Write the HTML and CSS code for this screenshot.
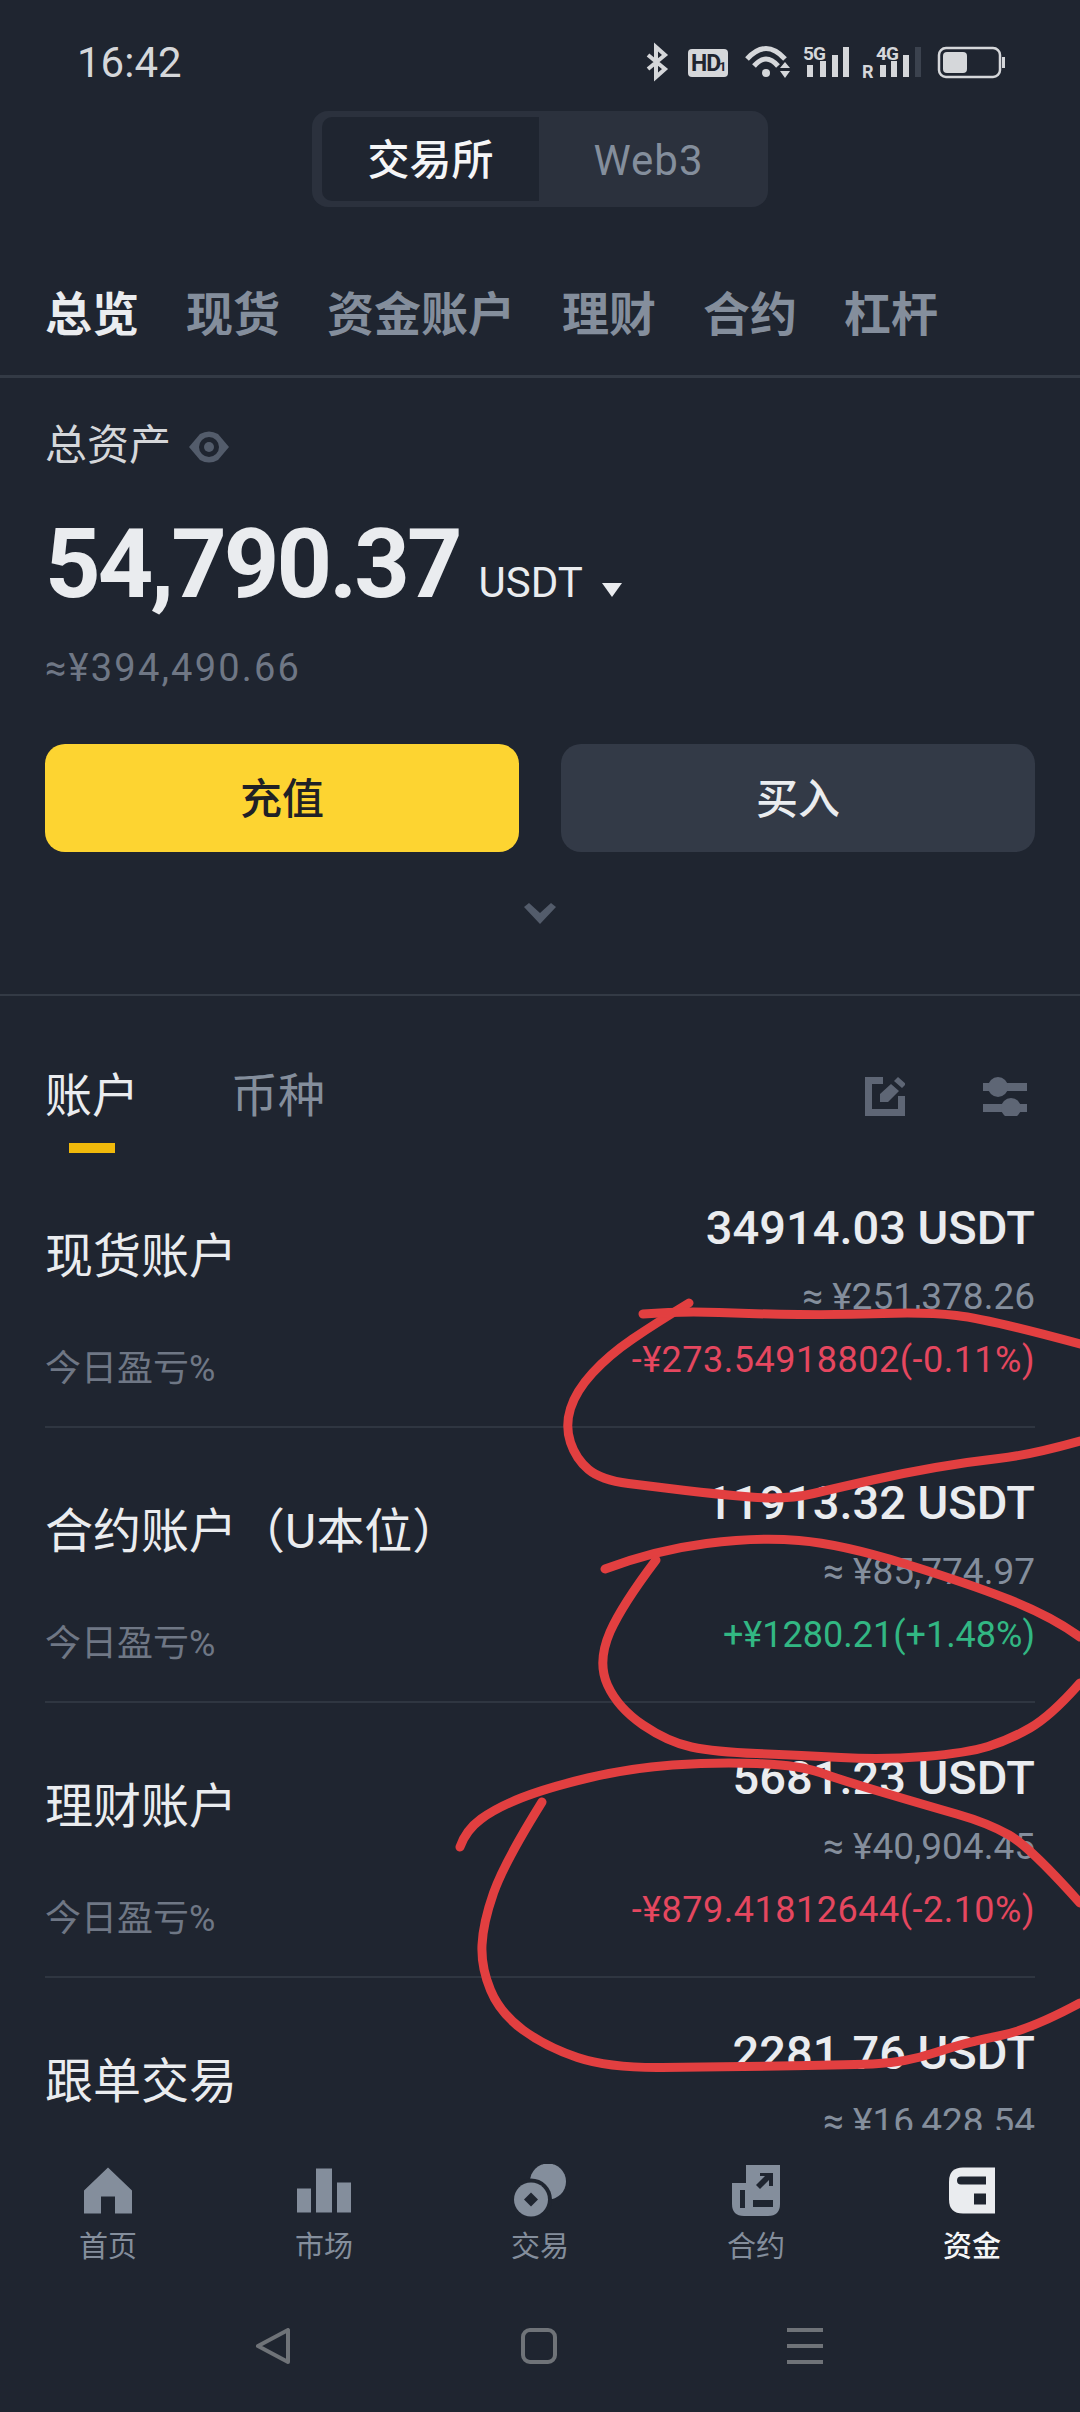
FILE: index.html
```html
<!DOCTYPE html>
<html lang="zh-CN">
<head>
  <meta charset="UTF-8">
  <title>资金</title>
  <link rel="stylesheet" href="styles.css">
</head>
<body>
<div class="phone">
  <!-- status bar -->
  <div class="status">
    <span class="time">16:42</span>
    <svg class="status-icons" viewBox="640 38 370 48" width="370" height="48">
      <path class="st-line" d="M648 55 L665 69 L656 77 V47 L665 55 L648 69"/>
      <rect class="st-fill" x="688" y="49" width="40" height="28" rx="4"/>
      <text class="st-hd" x="691" y="71">HD</text>
      <text class="st-hd1" x="719" y="71">1</text>
      <path class="st-wifi" d="M747 59 Q766 38 785 59"/>
      <path class="st-wifi" d="M754 66 Q766 52 778 66"/>
      <circle class="st-fill" cx="766" cy="73" r="4"/>
      <path class="st-fill" d="M780 68 L785 62 L790 68 Z M780 71 H790 L785 78 Z"/>
      <text class="st-net" x="803" y="60">5G</text>
      <rect class="st-fill" x="807" y="65" width="6" height="12"/>
      <rect class="st-fill" x="820" y="61" width="6" height="16"/>
      <rect class="st-fill" x="832" y="55" width="6" height="22"/>
      <rect class="st-fill" x="843" y="47" width="6" height="30"/>
      <text class="st-r" x="862" y="78">R</text>
      <text class="st-net" x="876" y="60">4G</text>
      <rect class="st-fill" x="880" y="65" width="6" height="12"/>
      <rect class="st-fill" x="891" y="61" width="6" height="16"/>
      <rect class="st-fill" x="903" y="55" width="6" height="22"/>
      <rect class="st-dim" x="915" y="47" width="6" height="30"/>
      <rect class="st-batt" x="939" y="48" width="61" height="29" rx="7"/>
      <rect class="st-fill" x="943" y="52" width="24" height="21" rx="4"/>
      <rect class="st-fill" x="1002" y="57" width="3" height="11"/>
    </svg>
  </div>

  <div class="switch">
    <div class="switch-on">交易所</div>
    <div class="switch-off">Web3</div>
  </div>

  <div class="tabs">
    <span class="tab active">总览</span>
    <span class="tab">现货</span>
    <span class="tab">资金账户</span>
    <span class="tab">理财</span>
    <span class="tab">合约</span>
    <span class="tab">杠杆</span>
  </div>

  <div class="assets">
    <div class="assets-label">
      <span>总资产</span>
      <svg class="eye" viewBox="0 0 40 32" width="40" height="32">
        <path d="M0 16 L11 3 Q20 -2 29 3 L40 16 L29 29 Q20 34 11 29 Z"/>
        <circle cx="20" cy="16" r="10"/>
        <circle cx="20" cy="16" r="5"/>
      </svg>
    </div>
    <div class="amount-row">
      <span class="amount">54,790.37</span>
      <span class="unit">USDT</span>
      <svg class="caret" viewBox="0 0 20 14" width="20" height="14"><path d="M0 0 H20 L10 14 Z"/></svg>
    </div>
    <div class="approx">≈¥394,490.66</div>
    <div class="btns">
      <div class="btn btn-yellow">充值</div>
      <div class="btn btn-gray">买入</div>
    </div>
    <svg class="more" viewBox="0 0 32 21" width="32" height="21"><path d="M0 4 L5 0 L16 10 L27 0 L32 4 L16 21 Z"/></svg>
  </div>

  <div class="subtabs">
    <div class="subtab active">账户</div>
    <div class="subtab">币种</div>
    <div class="subtab-icons">
      <svg class="edit" viewBox="0 0 40 39" width="40" height="39">
        <path d="M0 0 H18 V7 H7 V32 H33 V19 H40 V39 H0 Z"/>
        <path d="M15 17 L26 7 L34 14 L23 25 H15 Z M29 4 L33 0 L41 7 L37 11 Z"/>
      </svg>
      <svg class="sliders" viewBox="0 0 44 40" width="44" height="40">
        <path d="M0 7 H44 V15 H0 Z M0 28 H44 V36 H0 Z"/>
        <circle cx="15" cy="11" r="10"/>
        <circle cx="28" cy="32" r="10"/>
      </svg>
    </div>
  </div>

  <div class="list">
    <div class="row">
      <div class="row-left">
        <div class="row-name">现货账户</div>
        <div class="row-sub">今日盈亏%</div>
      </div>
      <div class="row-right">
        <div class="row-amount">34914.03 USDT</div>
        <div class="row-cny">≈ ¥251,378.26</div>
        <div class="row-pnl down">-¥273.54918802(-0.11%)</div>
      </div>
    </div>
    <div class="row">
      <div class="row-left">
        <div class="row-name">合约账户（U本位）</div>
        <div class="row-sub">今日盈亏%</div>
      </div>
      <div class="row-right">
        <div class="row-amount">11913.32 USDT</div>
        <div class="row-cny">≈ ¥85,774.97</div>
        <div class="row-pnl up">+¥1280.21(+1.48%)</div>
      </div>
    </div>
    <div class="row">
      <div class="row-left">
        <div class="row-name">理财账户</div>
        <div class="row-sub">今日盈亏%</div>
      </div>
      <div class="row-right">
        <div class="row-amount">5681.23 USDT</div>
        <div class="row-cny">≈ ¥40,904.45</div>
        <div class="row-pnl down">-¥879.41812644(-2.10%)</div>
      </div>
    </div>
    <div class="row">
      <div class="row-left">
        <div class="row-name">跟单交易</div>
      </div>
      <div class="row-right">
        <div class="row-amount">2281.76 USDT</div>
        <div class="row-cny">≈ ¥16,428.54</div>
      </div>
    </div>
  </div>

  <!-- bottom tab bar -->
  <div class="nav">
    <div class="nav-item">
      <svg viewBox="0 0 48 46" width="48" height="46"><path d="M24 0 L48 23 V46 H31 V29 H17 V46 H0 V23 Z"/></svg>
      <span>首页</span>
    </div>
    <div class="nav-item">
      <svg viewBox="0 0 54 44" width="54" height="44"><path d="M0 20 H14 V44 H0 Z M19 0 H35 V44 H19 Z M40 14 H54 V44 H40 Z"/></svg>
      <span>市场</span>
    </div>
    <div class="nav-item">
      <svg viewBox="0 0 52 52" width="52" height="52">
        <circle cx="34" cy="17" r="18"/>
        <circle class="nav-cut" cx="17" cy="35" r="21"/>
        <circle cx="17" cy="35" r="17"/>
        <path class="nav-cut" d="M17 28 L24 35 L17 42 L10 35 Z"/>
      </svg>
      <span>交易</span>
    </div>
    <div class="nav-item">
      <svg viewBox="0 0 48 51" width="48" height="51">
        <path d="M14 0 H48 V39 Q48 51 36 51 H12 Q0 51 0 39 V18 H14 Z"/>
        <path class="nav-cut" d="M8 25 H13 V43 H8 Z M21 35 H41 V42 H21 Z M24 20 L33 11 L28 11 L28 8 L41 8 L41 21 L37 21 L37 15 L28 24 Z"/>
      </svg>
      <span>合约</span>
    </div>
    <div class="nav-item active">
      <svg viewBox="0 0 46 46" width="46" height="46">
        <path d="M14 0 H46 V46 H14 Q0 46 0 32 V14 Q0 0 14 0 Z"/>
        <path class="nav-cut" d="M12 9 H37 V17 H12 Q8 17 8 13 Q8 9 12 9 Z M25 26 H37 V37 H25 Z"/>
      </svg>
      <span>资金</span>
    </div>
  </div>

  <div class="sysnav">
    <svg viewBox="0 0 36 36" width="36" height="36"><path d="M33 2 V34 L3 18 Z"/></svg>
    <svg viewBox="0 0 36 36" width="36" height="36"><rect x="2" y="2" width="32" height="32" rx="7"/></svg>
    <svg viewBox="0 0 36 36" width="36" height="36"><path d="M0 2 H36 M0 18 H36 M0 34 H36"/></svg>
  </div>

  <!-- red marker scribbles drawn over the screenshot -->
  <svg class="scribble" viewBox="0 0 1080 2412" width="1080" height="2412">
    <path d="M689 1303 Q656 1323 632.5 1339 Q609 1355 592.5 1373 Q576 1391 570.5 1408.5 Q565 1426 570.5 1442.5 Q576 1459 588.5 1469.5 Q601 1480 628.5 1483.5 Q656 1487 685.5 1490.5 Q715 1494 750.5 1497 Q786 1500 813.5 1493.5 Q841 1487 872.5 1480 Q904 1473 935.5 1467.5 Q967 1462 998.5 1458.5 Q1030 1455 1080 1441"/>
    <path d="M643 1314 Q681 1311 719 1312.5 Q757 1314 799 1314.5 Q841 1315 883 1313.5 Q925 1312 956.5 1315.5 Q988 1319 1080 1344"/>
    <path d="M605 1569 Q656 1550 706.5 1543.5 Q757 1537 799 1540.5 Q841 1544 904 1563.5 Q967 1583 1009 1599.5 Q1051 1616 1080 1637"/>
    <path d="M656 1560 Q622 1605 610 1632 Q597 1662 607.5 1685 Q618 1708 643 1725 Q668 1742 691.5 1747 Q715 1752 757 1753.5 Q799 1755 841 1757.5 Q883 1760 925 1756.5 Q967 1753 988 1746.5 Q1009 1740 1030 1728 Q1051 1716 1080 1683"/>
    <path d="M460 1847 Q466 1830 481 1819 Q496 1808 521 1798 Q546 1788 588 1778 Q630 1768 672.5 1765 Q715 1762 757 1763.5 Q799 1765 820 1772.5 Q841 1780 883 1792.5 Q925 1805 956.5 1814 Q988 1823 1009 1835 Q1030 1847 1080 1903"/>
    <path d="M542 1802 Q504 1863 493.5 1893 Q483 1923 482 1945 Q481 1967 490.5 1990 Q500 2013 523 2030 Q546 2047 577.5 2057.5 Q609 2068 662 2067.5 Q715 2067 778 2066 Q841 2065 872.5 2064 Q904 2063 935.5 2052.5 Q967 2042 998.5 2036 Q1030 2030 1080 2003"/>
  </svg>
</div>
</body>
</html>
```

FILE: styles.css
```css
* {
  box-sizing: border-box;
}

body {
  margin: 0;
  background: #1f2530;
  font-family: Roboto, "Noto Sans CJK SC", sans-serif;
  color: #eaecef;
}

.phone {
  width: 1080px;
  height: 2412px;
  position: relative;
  overflow: hidden;
  display: flex;
  flex-direction: column;
  background: #1f2530;
}

/* status bar */
.status {
  height: 111px;
  padding: 13px 70px 0 77px;
  display: flex;
  align-items: center;
  justify-content: space-between;
  flex-shrink: 0;
}

.time {
  font-size: 42px;
  color: #d5d7da;
}

.st-line {
  fill: none;
  stroke: #d5d7da;
  stroke-width: 4;
}

.st-wifi {
  fill: none;
  stroke: #d5d7da;
  stroke-width: 5;
}

.st-fill {
  fill: #d5d7da;
}

.st-dim {
  fill: #3b424e;
}

.st-batt {
  fill: none;
  stroke: #d5d7da;
  stroke-width: 2.5;
}

.st-hd {
  font-size: 23px;
  font-weight: 700;
  letter-spacing: -1px;
  fill: #1f2530;
}

.st-hd1 {
  font-size: 13px;
  font-weight: 700;
  fill: #1f2530;
}

.st-net {
  font-size: 19px;
  font-weight: 700;
  letter-spacing: -1px;
  fill: #d5d7da;
}

.st-r {
  font-size: 18px;
  font-weight: 700;
  fill: #d5d7da;
}

/* exchange / web3 switch */
.switch {
  width: 456px;
  height: 96px;
  margin: 0 auto;
  padding: 6px 10px;
  display: flex;
  background: #2b313d;
  border-radius: 16px;
  flex-shrink: 0;
}

.switch-on {
  width: 217px;
  background: #1f2530;
  border-radius: 10px 0 0 10px;
  font-size: 42px;
  font-weight: 500;
  color: #f5f6f7;
  text-align: center;
  line-height: 88px;
}

.switch-off {
  flex: 1;
  font-size: 42px;
  letter-spacing: 1px;
  color: #848e9c;
  text-align: center;
  line-height: 88px;
}

/* top tabs */
.tabs {
  height: 171px;
  padding: 78px 0 0 45px;
  display: flex;
  gap: 47px;
  border-bottom: 3px solid #333a45;
  flex-shrink: 0;
}

.tab {
  font-size: 47px;
  font-weight: 700;
  line-height: 60px;
  color: #848e9c;
}

.tab.active {
  color: #eaecef;
}

/* total assets */
.assets {
  padding: 38px 45px 70px;
  border-bottom: 2px solid #333a45;
  flex-shrink: 0;
  display: flex;
  flex-direction: column;
}

.assets-label {
  height: 60px;
  display: flex;
  align-items: center;
  gap: 18px;
  font-size: 42px;
  line-height: 52px;
  color: #d5d7da;
}

.eye {
  margin-top: 2px;
}

.eye path {
  fill: #535c6b;
}

.eye circle {
  fill: #1f2530;
}

.eye circle + circle {
  fill: #535c6b;
}

.amount-row {
  margin-top: 33px;
  height: 110px;
  display: flex;
  align-items: baseline;
  line-height: 110px;
}

.amount {
  font-size: 97px;
  font-weight: 700;
  letter-spacing: -3px;
  color: #eaecef;
}

.unit {
  margin-left: 19px;
  font-size: 42px;
  color: #eaecef;
}

.caret {
  margin: 0 0 13px 19px;
}

.caret path {
  fill: #eaecef;
}

.approx {
  margin-top: 24px;
  height: 50px;
  line-height: 50px;
  font-size: 38px;
  letter-spacing: 2.2px;
  color: #6f7785;
}

.btns {
  margin-top: 51px;
  display: flex;
  gap: 42px;
}

.btn {
  flex: 1;
  height: 108px;
  border-radius: 20px;
  font-size: 42px;
  font-weight: 500;
  line-height: 112px;
  text-align: center;
}

.btn-yellow {
  background: #fdd431;
  color: #1f2126;
}

.btn-gray {
  background: #333a47;
  color: #eaecef;
}

.more {
  margin: 51px auto 0;
}

.more path {
  fill: #535c6b;
}

/* accounts / coins */
.subtabs {
  height: 157px;
  padding: 70px 53px 0 45px;
  display: flex;
  gap: 92px;
  flex-shrink: 0;
}

.subtab {
  font-size: 47px;
  line-height: 60px;
  color: #848e9c;
  display: flex;
  flex-direction: column;
  align-items: center;
}

.subtab.active {
  color: #eaecef;
}

.subtab.active::after {
  content: "";
  width: 46px;
  height: 10px;
  margin-top: 17px;
  background: #f0b90b;
}

.subtab-icons {
  margin-left: auto;
  height: 60px;
  display: flex;
  align-items: center;
  gap: 78px;
}

.subtab-icons svg {
  fill: #5e6675;
}

/* account rows */
.list {
  flex: 1;
  overflow: hidden;
  min-height: 0;
}

.row {
  height: 275px;
  margin: 0 45px;
  display: flex;
  justify-content: space-between;
  border-bottom: 2px solid #2f3641;
}

.row-left {
  padding-top: 74px;
}

.row-name {
  font-size: 48px;
  line-height: 60px;
  color: #eaecef;
}

.row-sub {
  margin-top: 57px;
  font-size: 36px;
  line-height: 50px;
  color: #6f7785;
}

.row-right {
  padding-top: 50px;
  text-align: right;
}

.row-amount {
  font-size: 47px;
  font-weight: 500;
  line-height: 50px;
  color: #eaecef;
}

.row-cny {
  margin-top: 19px;
  font-size: 37px;
  line-height: 50px;
  color: #848e9c;
}

.row-pnl {
  margin-top: 13px;
  font-size: 36px;
  line-height: 50px;
}

.down {
  color: #e5475f;
  letter-spacing: 0.5px;
}

.up {
  color: #32b783;
}

/* bottom nav */
.nav {
  height: 136px;
  padding-top: 34px;
  display: grid;
  grid-template-columns: repeat(5, 216px);
  flex-shrink: 0;
}

.nav-item {
  display: flex;
  flex-direction: column;
  align-items: center;
  font-size: 29px;
  line-height: 40px;
  color: #848e9c;
}

.nav-item svg {
  height: 53px;
  margin-bottom: 10px;
  fill: #848e9c;
}

.nav-item.active {
  color: #f5f6f7;
  font-weight: 500;
}

.nav-item.active svg {
  fill: #eaecef;
}

.nav-cut {
  fill: #1f2530;
}

.sysnav {
  height: 146px;
  flex-shrink: 0;
  padding: 14px 3px 0 0;
  display: flex;
  align-items: center;
  justify-content: center;
  gap: 230px;
}

.sysnav svg {
  fill: none;
  stroke: #6f7378;
  stroke-width: 4;
  stroke-linejoin: round;
}

/* marker overlay */
.scribble {
  position: absolute;
  left: 0;
  top: 0;
  pointer-events: none;
}

.scribble path {
  fill: none;
  stroke: #e23f40;
  stroke-width: 9;
  stroke-linecap: round;
  stroke-linejoin: round;
}
```
